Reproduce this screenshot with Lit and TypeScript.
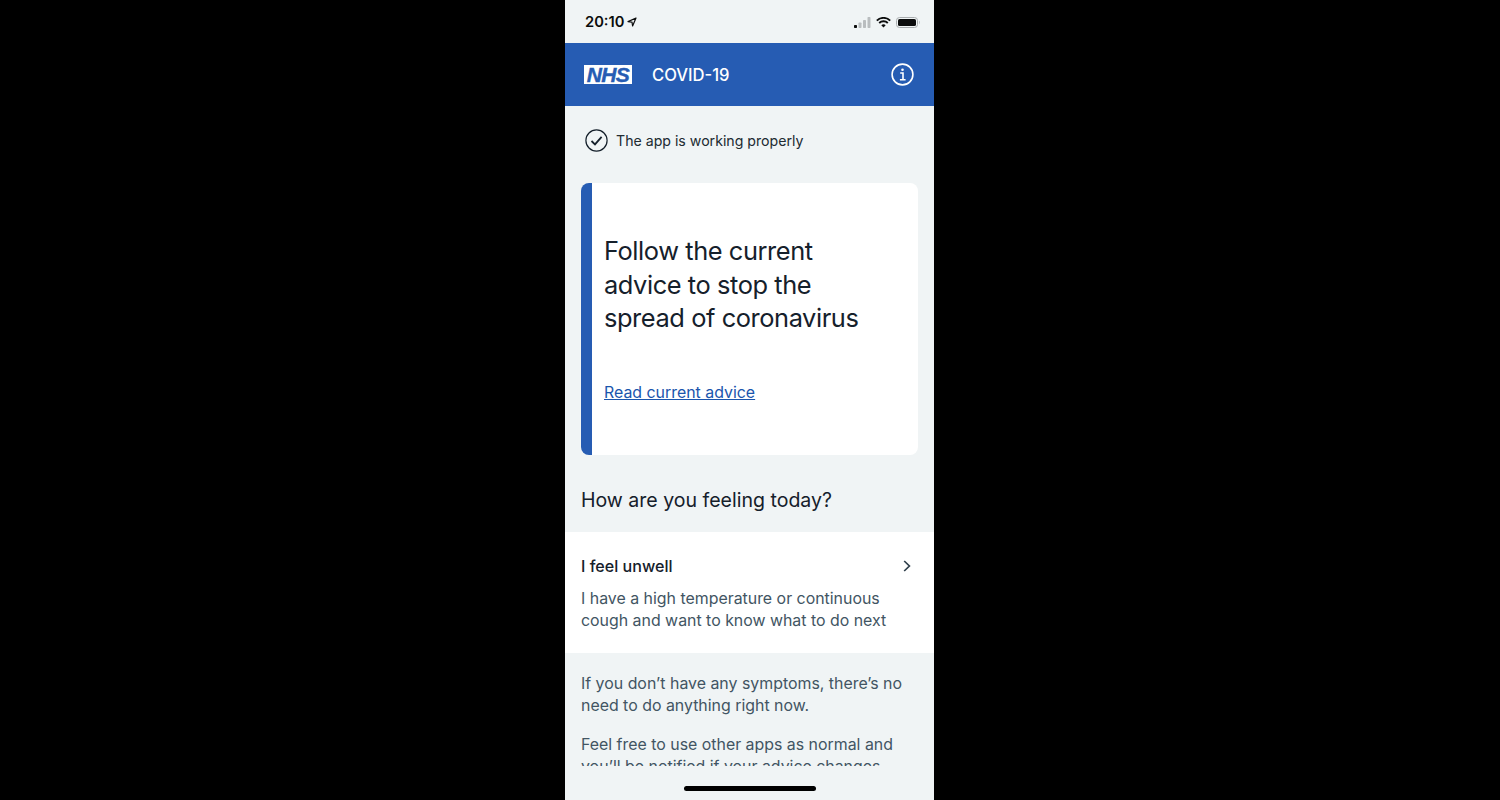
import { LitElement, html, css } from 'lit';
import { customElement } from 'lit/decorators.js';

@customElement('app-root')
export class AppRoot extends LitElement {
  static styles = css`
    :host {
      display: flex;
      justify-content: center;
      width: 1500px;
      height: 800px;
      background: #000;
      font-family: Inter, 'Liberation Sans', sans-serif;
      color: #212b32;
    }

    .phone {
      width: 369px;
      margin-right: 1px;
      height: 800px;
      background: #f0f4f5;
      display: flex;
      flex-direction: column;
      overflow: hidden;
    }

    .status {
      height: 43px;
      flex: none;
      display: flex;
      align-items: center;
      justify-content: space-between;
      padding: 1px 14px 0 20px;
      box-sizing: border-box;
    }

    .time {
      display: flex;
      align-items: center;
      gap: 3px;
      font-size: 14.7px;
      font-weight: 600;
      color: #0b0c0c;
    }

    .status-right {
      display: flex;
      align-items: center;
      gap: 5px;
    }

    .header {
      height: 63px;
      flex: none;
      background: #265cb3;
      color: #fff;
      display: flex;
      align-items: center;
      padding: 0 20.5px 0 19px;
    }

    .logo {
      width: 48px;
      height: 19px;
      background: #fff;
      color: #265cb3;
      font-family: 'Liberation Sans', Arial, sans-serif;
      font-size: 21px;
      font-weight: 700;
      font-style: italic;
      line-height: 19px;
      text-align: center;
      letter-spacing: -0.6px;
      -webkit-text-stroke: 0.4px #265cb3;
    }

    .title {
      margin-left: 20px;
      font-size: 16.6px;
      font-weight: 500;
      flex: 1;
    }

    .scroll {
      flex: none;
      height: 660px;
      overflow: hidden;
    }

    .working {
      display: flex;
      align-items: center;
      gap: 8px;
      padding: 23px 20px 0;
      height: 23px;
      font-size: 14.15px;
    }

    .card {
      margin: 31px 16px 0;
      height: 272px;
      box-sizing: border-box;
      background: #fff;
      border-radius: 8px;
      border-left: 11.5px solid #265cb3;
      padding: 51px 12px 0;
    }

    .card h1 {
      margin: 0;
      max-width: 270px;
      font-size: 25.4px;
      font-weight: 400;
      line-height: 33.5px;
      letter-spacing: -0.42px;
      color: #15202b;
    }

    .card a {
      display: block;
      margin-top: 47px;
      font-size: 15.9px;
      line-height: 22px;
      color: #1a55ad;
      text-decoration: underline;
    }

    h2 {
      margin: 31px 16px 0;
      font-size: 19.55px;
      font-weight: 400;
      line-height: 28px;
      color: #15202b;
    }

    .row {
      margin-top: 18px;
      height: 121px;
      box-sizing: border-box;
      background: #fff;
      padding: 24px 16px 0;
    }

    .row-head {
      display: flex;
      align-items: center;
      justify-content: space-between;
      font-size: 16.1px;
      font-weight: 500;
      line-height: 20px;
      color: #15202b;
      padding-right: 7px;
    }

    .row p {
      margin: 12px 0 0;
    }

    p {
      font-size: 15.9px;
      line-height: 22px;
      color: #425563;
    }

    .note {
      padding: 20px 16px 0;
    }

    .note p {
      margin: 0 0 17px;
    }

    .home {
      flex: 1;
      display: flex;
      justify-content: center;
      padding-top: 20px;
    }

    .home div {
      width: 132px;
      height: 5px;
      background: #000;
      border-radius: 3px;
    }
  `;

  render() {
    return html`
      <div class="phone">
        <div class="status">
          <div class="time">
            20:10
            <svg width="10" height="10" viewBox="0 0 10 10" fill="none" stroke="#0b0c0c" stroke-width="1.2" stroke-linejoin="round">
              <path d="M9 1 L1 4.6 L5 5.2 L5.6 9 Z" />
            </svg>
          </div>
          <div class="status-right">
            <svg width="17" height="11" viewBox="0 0 17 11">
              <rect x="0" y="8" width="3" height="3" rx="0.7" fill="#0b0c0c" />
              <rect x="4.5" y="5.5" width="3" height="5.5" rx="0.7" fill="#b9bdbf" />
              <rect x="9" y="3" width="3" height="8" rx="0.7" fill="#b9bdbf" />
              <rect x="13.5" y="0" width="3" height="11" rx="0.7" fill="#b9bdbf" />
            </svg>
            <svg width="15" height="11" viewBox="0 0 15 11" fill="none" stroke="#0b0c0c" stroke-width="1.9">
              <path d="M0.8 3.6 A9.6 9.6 0 0 1 14.2 3.6" />
              <path d="M3.2 6 A6.2 6.2 0 0 1 11.8 6" />
              <path d="M7.5 10.6 L5.3 8.3 A3.1 3.1 0 0 1 9.7 8.3 Z" fill="#0b0c0c" stroke="none" />
            </svg>
            <svg width="24" height="11" viewBox="0 0 24 11">
              <rect x="0.5" y="0.5" width="21" height="10" rx="3" fill="none" stroke="#a9adaf" />
              <rect x="2" y="2" width="18" height="7" rx="1.6" fill="#0b0c0c" />
              <path d="M23 3.8 C23.8 4.1 23.8 6.9 23 7.2 Z" fill="#a9adaf" />
            </svg>
          </div>
        </div>

        <div class="header">
          <div class="logo">NHS</div>
          <div class="title">COVID-19</div>
          <svg width="23" height="23" viewBox="0 0 23 23" fill="none" stroke="#fff">
            <circle cx="11.5" cy="11.5" r="10.4" stroke-width="1.6" />
            <circle cx="11.5" cy="6.8" r="1.3" fill="#fff" stroke="none" />
            <path d="M9.2 10 H12 V16.6 M8.9 16.8 H14.6" stroke-width="1.6" />
          </svg>
        </div>

        <div class="scroll">
          <div class="working">
            <svg width="23" height="23" viewBox="0 0 23 23" fill="none" stroke="#15202b">
              <circle cx="11.5" cy="11.5" r="10.6" stroke-width="1.2" />
              <path d="M6.5 12 L10 15.4 L16.6 7.8" stroke-width="1.8" />
            </svg>
            The app is working properly
          </div>

          <div class="card">
            <h1>Follow the current advice to stop the spread of coronavirus</h1>
            <a>Read current advice</a>
          </div>

          <h2>How are you feeling today?</h2>

          <div class="row">
            <div class="row-head">
              I feel unwell
              <svg width="8" height="12" viewBox="0 0 8 12" fill="none" stroke="#2f3f4b" stroke-width="1.7">
                <path d="M1.2 1 L6.4 6 L1.2 11" />
              </svg>
            </div>
            <p>I have a high temperature or continuous cough and want to know what to do next</p>
          </div>

          <div class="note">
            <p>If you don’t have any symptoms, there’s no need to do anything right now.</p>
            <p>Feel free to use other apps as normal and you’ll be notified if your advice changes.</p>
          </div>
        </div>

        <div class="home"><div></div></div>
      </div>
    `;
  }
}
